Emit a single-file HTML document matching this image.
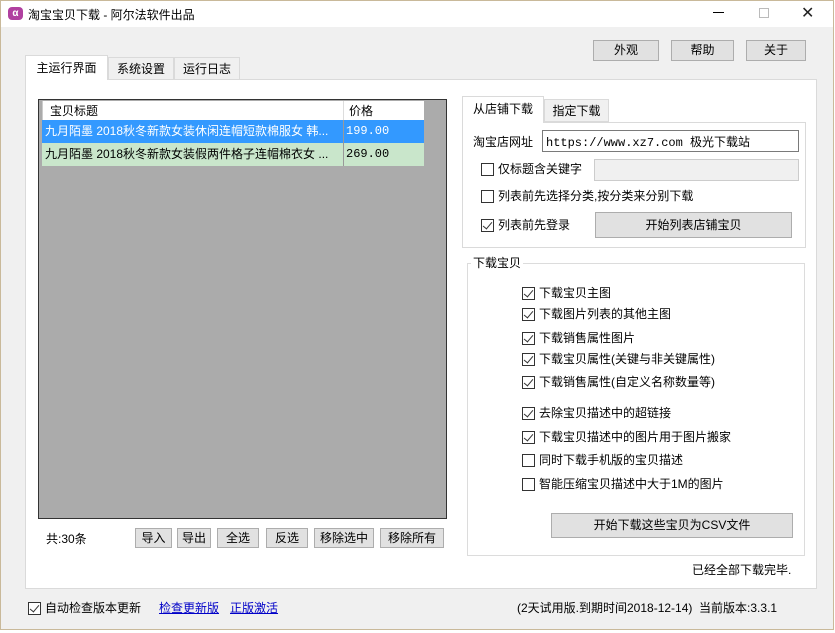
<!DOCTYPE html>
<html><head><meta charset="utf-8"><style>
*{box-sizing:border-box;margin:0;padding:0}
body{width:835px;height:633px;position:relative;overflow:hidden;background:#fff;font-family:"Liberation Sans","Noto Sans CJK SC",sans-serif;font-size:12px;color:#000}
.a{position:absolute;white-space:nowrap}
.win{position:absolute;left:0;top:0;width:834px;height:630px;background:#f0f0f0;border:1px solid #c9b99a}
.title{position:absolute;left:0;top:0;width:832px;height:26px;background:#fff}
.btn{position:absolute;background:#e1e1e1;border:1px solid #adadad;text-align:center;font-size:12px}
.cb{position:absolute;width:13px;height:13px;border:1px solid #333;background:#fff}
.cb.c::after{content:"";position:absolute;left:3px;top:0px;width:4px;height:8px;border:solid #333;border-width:0 1.5px 1.5px 0;transform:rotate(40deg)}
.lbl{position:absolute;white-space:nowrap;font-size:12px;line-height:14px}
.mono{font-family:"Liberation Mono","Noto Sans CJK SC",monospace;font-size:12px}
</style></head><body>
<div class="win">
<div class="title"></div>
<div class="a" style="left:7px;top:6px;width:15px;height:13px;border-radius:4px;background:#b040a0;color:#fff;font-size:10px;font-weight:bold;line-height:13px;text-align:center">α</div>
<div class="a" style="left:27px;top:5px;font-size:12px">淘宝宝贝下载 - 阿尔法软件出品</div>
<div class="a" style="left:712px;top:11px;width:11px;height:1px;background:#000"></div>
<div class="a" style="left:758px;top:7px;width:10px;height:10px;border:1px solid #bbb"></div>
<div class="a" style="left:800px;top:0px;font-size:16px;line-height:26px;color:#222">✕</div>

<div class="btn" style="left:592px;top:39px;width:66px;height:21px;line-height:19px">外观</div>
<div class="btn" style="left:670px;top:39px;width:63px;height:21px;line-height:19px">帮助</div>
<div class="btn" style="left:745px;top:39px;width:60px;height:21px;line-height:19px">关于</div>

<div class="a" style="left:24px;top:78px;width:792px;height:510px;background:#fff;border:1px solid #dadada"></div>
<div class="a" style="left:24px;top:54px;width:83px;height:25px;background:#fff;border:1px solid #dadada;border-bottom:none;text-align:center;line-height:25px">主运行界面</div>
<div class="a" style="left:107px;top:56px;width:66px;height:23px;background:#f0f0f0;border:1px solid #dadada;text-align:center;line-height:23px">系统设置</div>
<div class="a" style="left:173px;top:56px;width:66px;height:23px;background:#f0f0f0;border:1px solid #dadada;text-align:center;line-height:23px">运行日志</div>

<div class="a" style="left:37px;top:98px;width:409px;height:420px;background:#ababab;border:1px solid #333"></div>
<div class="a" style="left:41px;top:100px;width:382px;height:19px;background:#fff;border-left:1px solid #ccc"></div>
<div class="a" style="left:49px;top:101px">宝贝标题</div>
<div class="a" style="left:342px;top:100px;width:1px;height:19px;background:#ddd"></div>
<div class="a" style="left:348px;top:101px">价格</div>
<div class="a" style="left:41px;top:119px;width:382px;height:23px;background:#3399ff;color:#fff;line-height:23px;padding-left:3px">九月陌墨 2018秋冬新款女装休闲连帽短款棉服女 韩...</div>
<div class="a" style="left:41px;top:142px;width:382px;height:23px;background:#c9e6cb;line-height:23px;padding-left:3px">九月陌墨 2018秋冬新款女装假两件格子连帽棉衣女 ...</div>
<div class="a" style="left:342px;top:119px;width:1px;height:46px;background:#999"></div>
<div class="a mono" style="left:345px;top:123px;color:#fff">199.00</div>
<div class="a mono" style="left:345px;top:146px">269.00</div>

<div class="a" style="left:45px;top:529px">共:30条</div>
<div class="btn" style="left:134px;top:527px;width:37px;height:20px;line-height:18px">导入</div>
<div class="btn" style="left:176px;top:527px;width:34px;height:20px;line-height:18px">导出</div>
<div class="btn" style="left:216px;top:527px;width:42px;height:20px;line-height:18px">全选</div>
<div class="btn" style="left:265px;top:527px;width:42px;height:20px;line-height:18px">反选</div>
<div class="btn" style="left:313px;top:527px;width:60px;height:20px;line-height:18px">移除选中</div>
<div class="btn" style="left:379px;top:527px;width:64px;height:20px;line-height:18px">移除所有</div>

<div class="a" style="left:461px;top:121px;width:344px;height:126px;background:#fff;border:1px solid #dadada"></div>
<div class="a" style="left:461px;top:95px;width:82px;height:27px;background:#fff;border:1px solid #dadada;border-bottom:none;text-align:center;line-height:25px">从店铺下载</div>
<div class="a" style="left:543px;top:98px;width:65px;height:23px;background:#f0f0f0;border:1px solid #dadada;text-align:center;line-height:23px">指定下载</div>
<div class="a" style="left:472px;top:132px">淘宝店网址</div>
<div class="a" style="left:541px;top:129px;width:257px;height:22px;border:1px solid #7a7a7a;background:#fff"></div>
<div class="a mono" style="left:545px;top:132px;font-size:12px">https://www.xz7.com 极光下载站</div>
<div class="cb" style="left:480px;top:162px"></div><div class="lbl" style="left:497px;top:161px">仅标题含关键字</div>
<div class="a" style="left:593px;top:158px;width:205px;height:22px;border:1px solid #ccc;background:#f0f0f0"></div>
<div class="cb" style="left:480px;top:189px"></div><div class="lbl" style="left:497px;top:188px">列表前先选择分类,按分类来分别下载</div>
<div class="cb c" style="left:480px;top:218px"></div><div class="lbl" style="left:497px;top:217px">列表前先登录</div>
<div class="btn" style="left:594px;top:211px;width:197px;height:26px;line-height:24px">开始列表店铺宝贝</div>

<div class="a" style="left:466px;top:262px;width:338px;height:293px;border:1px solid #dcdcdc"></div>
<div class="a" style="left:470px;top:253px;background:#fff;padding:0 2px">下载宝贝</div>
<div class="cb c" style="left:521px;top:286px"></div><div class="lbl" style="left:538px;top:285px">下载宝贝主图</div>
<div class="cb c" style="left:521px;top:307px"></div><div class="lbl" style="left:538px;top:306px">下载图片列表的其他主图</div>
<div class="cb c" style="left:521px;top:331px"></div><div class="lbl" style="left:538px;top:330px">下载销售属性图片</div>
<div class="cb c" style="left:521px;top:352px"></div><div class="lbl" style="left:538px;top:351px">下载宝贝属性(关键与非关键属性)</div>
<div class="cb c" style="left:521px;top:375px"></div><div class="lbl" style="left:538px;top:374px">下载销售属性(自定义名称数量等)</div>
<div class="cb c" style="left:521px;top:406px"></div><div class="lbl" style="left:538px;top:405px">去除宝贝描述中的超链接</div>
<div class="cb c" style="left:521px;top:430px"></div><div class="lbl" style="left:538px;top:429px">下载宝贝描述中的图片用于图片搬家</div>
<div class="cb" style="left:521px;top:453px"></div><div class="lbl" style="left:538px;top:452px">同时下载手机版的宝贝描述</div>
<div class="cb" style="left:521px;top:477px"></div><div class="lbl" style="left:538px;top:476px">智能压缩宝贝描述中大于1M的图片</div>
<div class="btn" style="left:550px;top:512px;width:242px;height:25px;line-height:23px">开始下载这些宝贝为CSV文件</div>
<div class="a" style="left:691px;top:560px">已经全部下载完毕.</div>

<div class="cb c" style="left:27px;top:601px"></div><div class="lbl" style="left:44px;top:600px">自动检查版本更新</div>
<div class="lbl" style="left:158px;top:600px;color:#0000c8;text-decoration:underline">检查更新版</div>
<div class="lbl" style="left:229px;top:600px;color:#0000c8;text-decoration:underline">正版激活</div>
<div class="lbl" style="left:516px;top:600px">(2天试用版.到期时间2018-12-14)&nbsp;&nbsp;当前版本:3.3.1</div>
</div>
</body></html>
